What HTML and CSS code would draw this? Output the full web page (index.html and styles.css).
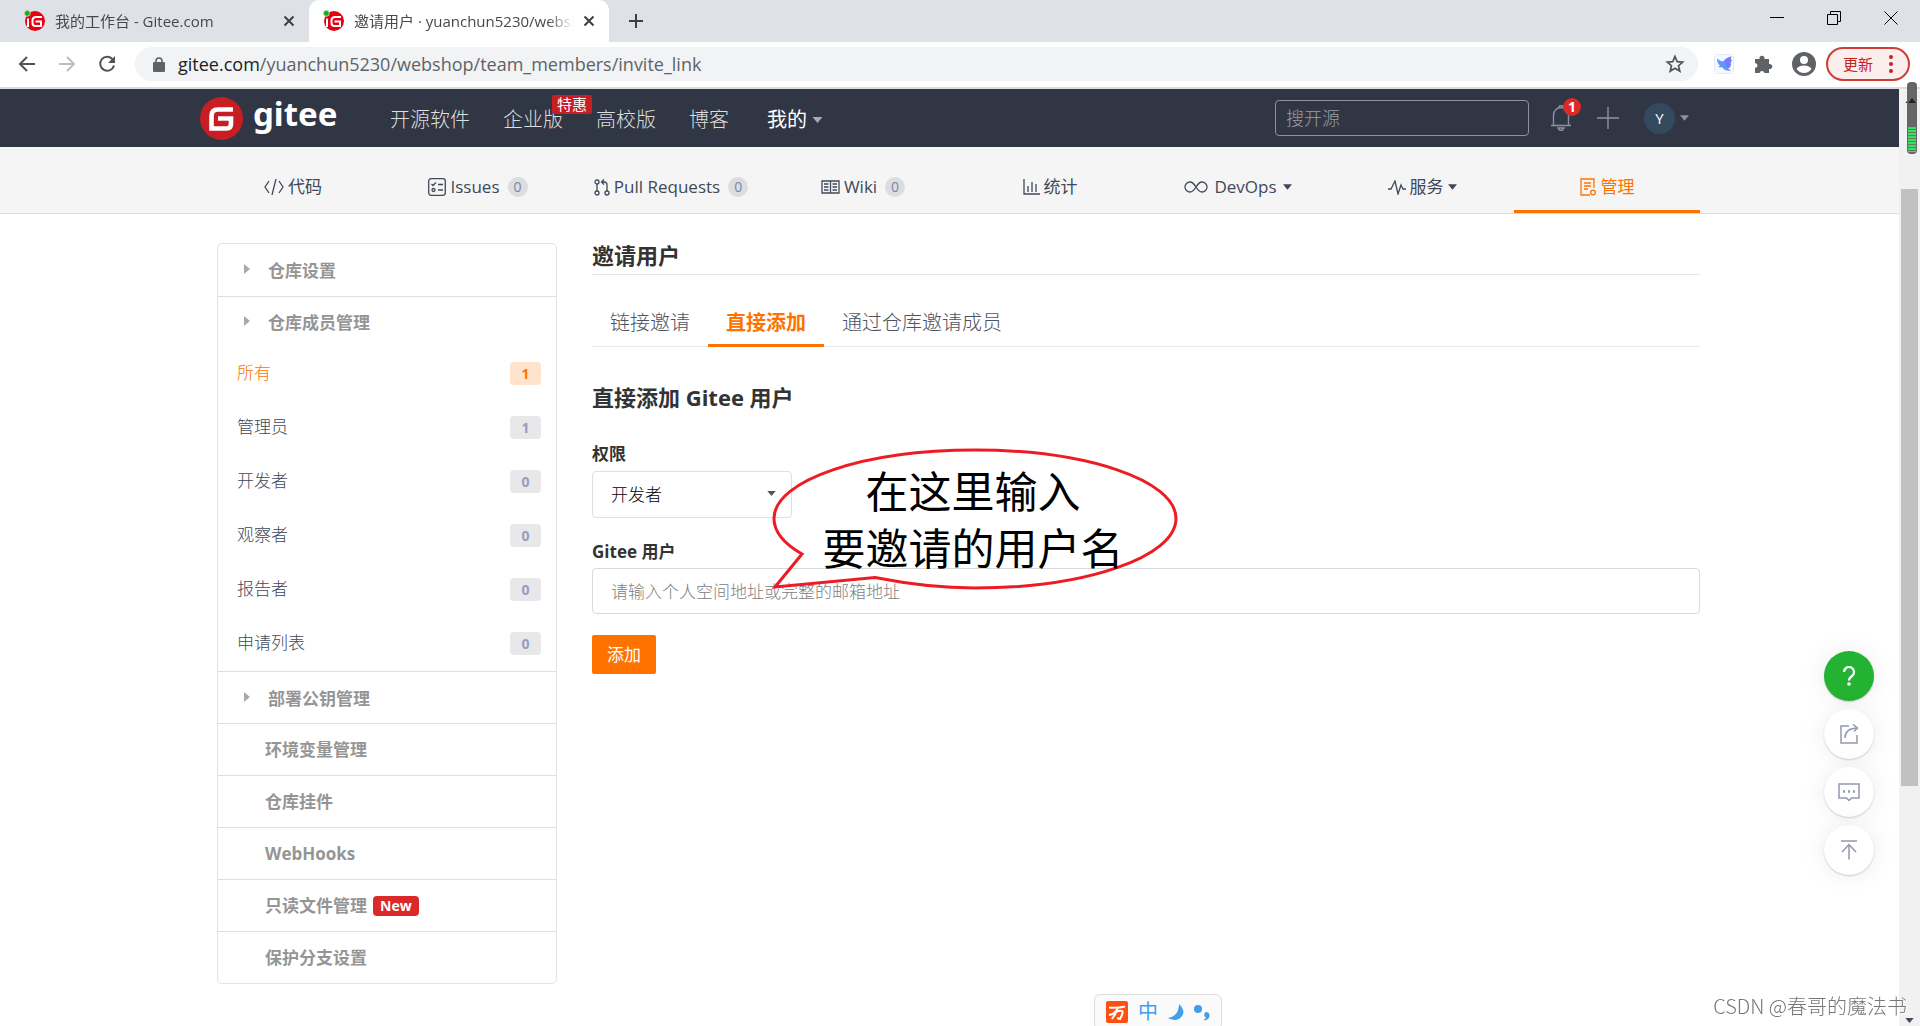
FILE: index.html
```html
<!DOCTYPE html>
<html lang="zh-CN">
<head>
<meta charset="utf-8">
<title>邀请用户 · yuanchun5230/webshop</title>
<link rel="stylesheet" href="styles.css">
</head>
<body>
<svg class="defs" width="0" height="0" aria-hidden="true">
  <symbol id="favicon" viewBox="0 0 22 22">
    <circle cx="11" cy="11" r="10" fill="#e60012"/>
    <path d="M18 7h-6Q8.500 7 8.500 10.500v2.500q0 3 3 3H17v-4.500h-5.500" fill="none" stroke="#fff" stroke-width="2"/>
    <path d="M4 8.500v8.500" stroke="#fff" stroke-width="2"/>
    <circle cx="3.300" cy="3.300" r="3" fill="#13b316" stroke="#dee1e6" stroke-width=".8"/>
  </symbol>
  <symbol id="cross" viewBox="0 0 12 12"><path d="M1.500 1.500l9 9m0-9l-9 9" fill="none" stroke="#3c4043" stroke-width="2"/></symbol>
  <symbol id="down" viewBox="0 0 10 6"><path d="M0 0h10L5 6z" fill="currentColor"/></symbol>
  <symbol id="right" viewBox="0 0 6 10"><path d="M0 0v10l6-5z" fill="#aaa"/></symbol>
</svg>

<header class="browser">
  <div class="tabstrip">
    <div class="tab">
      <svg class="fav"><use href="#favicon"/></svg><span class="tab-title">我的工作台 - Gitee.com</span>
      <button class="bare" aria-label="关闭标签"><svg width="12" height="12"><use href="#cross"/></svg></button>
    </div>
    <div class="tab active">
      <svg class="fav"><use href="#favicon"/></svg><span class="tab-title">邀请用户 · yuanchun5230/webshop</span>
      <button class="bare" aria-label="关闭标签"><svg width="12" height="12"><use href="#cross"/></svg></button>
    </div>
    <button class="bare newtab" aria-label="新标签页"><svg width="16" height="16" viewBox="0 0 16 16"><path d="M8 1v14M1 8h14" stroke="#3c4043" stroke-width="2"/></svg></button>
    <div class="window-buttons">
      <button class="bare" aria-label="最小化"><svg width="14" height="14" viewBox="0 0 14 14"><path d="M0 6.500h14" stroke="#000"/></svg></button>
      <button class="bare" aria-label="还原"><svg width="14" height="14" viewBox="0 0 14 14"><path d="M.5 3.500h10v10H.5zM3.500 3V.5h10v10H11" fill="none" stroke="#000"/></svg></button>
      <button class="bare" aria-label="关闭"><svg width="14" height="14" viewBox="0 0 14 14"><path d="M.5.500l13 13m0-13l-13 13" stroke="#000"/></svg></button>
    </div>
  </div>
  <div class="toolbar">
    <div class="history">
      <button class="bare" aria-label="后退"><svg width="18" height="18" viewBox="0 0 18 18"><path d="M17 9H2m7-7L2 9l7 7" fill="none" stroke="#50545a" stroke-width="2"/></svg></button>
      <button class="bare" aria-label="前进"><svg width="18" height="18" viewBox="0 0 18 18"><path d="M1 9h15M9 2l7 7-7 7" fill="none" stroke="#bcbec1" stroke-width="2"/></svg></button>
      <button class="bare" aria-label="刷新"><svg width="18" height="18" viewBox="0 0 18 18"><path d="M14.800 4.500A7 7 0 1 0 16 10.500" fill="none" stroke="#50545a" stroke-width="2"/><path d="M17 1v7h-7z" fill="#50545a"/></svg></button>
    </div>
    <div class="address">
      <svg width="12" height="15" viewBox="0 0 12 15"><rect y="5" width="12" height="10" rx="1" fill="#5f6368"/><path d="M3 6V4a3 3 0 0 1 6 0v2" fill="none" stroke="#5f6368" stroke-width="1.600"/></svg>
      <div class="url" role="textbox" aria-label="地址"><b>gitee.com</b>/yuanchun5230/webshop/team_members/invite_link</div>
      <button class="bare" aria-label="收藏"><svg width="20" height="20" viewBox="0 0 20 20"><path d="M10 2.500l2.200 5.100 5.500.5-4.200 3.600 1.300 5.400L10 14.200l-4.800 2.900 1.300-5.400L2.300 8.100l5.500-.5z" fill="none" stroke="#50545a" stroke-width="1.700"/></svg></button>
    </div>
    <div class="extensions">
      <svg width="20" height="20" viewBox="0 0 20 20"><rect x=".5" y=".5" width="19" height="19" rx="3" fill="#f8f9ff" stroke="#e4e8fa"/><path d="M3 4.500q4 3.500 7 2.500 2-3.500 7.500-4.500-1.500 2.500.5 4-1 .5-1.500 2 1 4-2.500 6l3 2q-6 1-8.500-3L4 13l2-1.500Q3 9 3 4.500z" fill="#5f97fb"/><path d="M10 7q2-3.500 7.500-4.500-1.500 2.500.5 4-1 .5-1.500 2 1 4-2.500 6z" fill="#7f77ff"/></svg>
      <svg width="20" height="20" viewBox="0 0 20 20"><path d="M2 5h4.500a2.600 2.600 0 1 1 5 0H16v5a2.600 2.600 0 1 1 0 5v4h-4.500a2.600 2.600 0 0 0-5 0H2v-5a2.500 2.500 0 0 0 0-5z" fill="#5f6368"/></svg>
      <svg width="24" height="24" viewBox="0 0 24 24"><circle cx="12" cy="12" r="12" fill="#5f6368"/><circle cx="12" cy="8" r="4" fill="#fff"/><path d="M4.500 17q2-3.500 7.500-3.500t7.500 3.500q-3 4-7.500 4t-7.500-4z" fill="#fff"/></svg>
    </div>
    <button class="update">更新<svg width="4" height="18" viewBox="0 0 4 18"><g fill="#c5221f"><circle cx="2" cy="2" r="2"/><circle cx="2" cy="9" r="2"/><circle cx="2" cy="16" r="2"/></g></svg></button>
  </div>
</header>

<div class="viewport">
  <div class="page">
    <header class="site-header">
      <a class="logo" href="#">
        <svg width="43" height="43" viewBox="0 0 43 43"><circle cx="21.500" cy="21.500" r="21.500" fill="#c71d23"/><path d="M33 12.500H18q-6.500 0-6.500 6.500v12.500h15q4.500 0 4.500-5v-5H18" fill="none" stroke="#fff" stroke-width="4.600"/></svg>
        <span>gitee</span>
      </a>
      <nav class="site-nav">
        <a href="#">开源软件</a>
        <a class="enterprise" href="#">企业版<em>特惠</em></a>
        <a href="#">高校版</a>
        <a href="#">博客</a>
        <a class="mine" href="#">我的<svg width="11" height="6"><use href="#down"/></svg></a>
      </nav>
      <input class="search" type="text" placeholder="搜开源" aria-label="搜开源">
      <div class="user-tools">
        <button class="bare bell" aria-label="通知"><svg width="22" height="26" viewBox="0 0 22 26"><path d="M1 20.500h20M3.500 20V10a7.500 7.500 0 0 1 15 0v10M9 2.500a2 2 0 0 1 4 0M8 23h6q-1 2.500-3 2.500T8 23z" fill="none" stroke="#8c92a4" stroke-width="1.400"/></svg><span>1</span></button>
        <button class="bare" aria-label="新建"><svg width="22" height="22" viewBox="0 0 22 22"><path d="M11 0v22M0 11h22" stroke="#8c92a4" stroke-width="1.400"/></svg></button>
        <button class="bare account" aria-label="账户"><span>Y</span><svg width="9" height="6"><use href="#down"/></svg></button>
      </div>
    </header>

    <nav class="repo-nav">
      <a href="#"><svg width="20" height="16" viewBox="0 0 20 16"><path d="M5 2L1 8l4 6M15 2l4 6-4 6M12 0L8 16"/></svg>代码</a>
      <a href="#"><svg width="18" height="18" viewBox="0 0 18 18"><rect x=".7" y=".7" width="16.600" height="16.600" rx="2.500"/><path d="M3.500 6l1.500 1.500L8 4.500M10 6.500h5M10 12h5"/><circle cx="5.500" cy="12" r="1.500"/></svg>Issues<i>0</i></a>
      <a href="#"><svg width="16" height="17" viewBox="0 0 16 17"><circle cx="3" cy="3" r="2"/><circle cx="3" cy="14" r="2"/><circle cx="13" cy="14" r="2"/><path d="M3 5v7M13 12V6q0-3-3-3H8m2-2.500L7.500 3 10 5.500"/></svg>Pull Requests<i>0</i></a>
      <a href="#"><svg width="19" height="14" viewBox="0 0 19 14"><path d="M1 1h17v12H1zM9.500 1v12M3 4h4.500M3 7h4.500M3 10h4.500M11.500 4H16M11.500 7H16M11.500 10H16"/></svg>Wiki<i>0</i></a>
      <a href="#"><svg width="17" height="16" viewBox="0 0 17 16"><path d="M1 0v15h16M5 7v6M9 3v10M13 5v8"/></svg>统计</a>
      <a class="devops" href="#"><svg width="24" height="12" viewBox="0 0 24 12"><path d="M12 6Q9 1 6 1a5 5 0 0 0 0 10q3 0 6-5t6-5a5 5 0 0 1 0 10q-3 0-6-5z"/></svg>DevOps<svg class="caret" width="9" height="6"><use href="#down"/></svg></a>
      <a href="#"><svg width="18" height="15" viewBox="0 0 18 15"><path d="M0 9h3L7 1l3 13 3-9 2 4h3"/></svg>服务<svg class="caret" width="9" height="6"><use href="#down"/></svg></a>
      <a class="current" href="#"><svg width="17" height="18" viewBox="0 0 17 18"><path d="M10 17H1V1h13v9M4 5h7M4 8h7M4 11h4"/><circle cx="13" cy="14.500" r="2.300"/></svg>管理</a>
    </nav>

    <div class="columns">
      <aside class="side">
        <a class="group" href="#"><svg class="tri" width="6" height="10"><use href="#right"/></svg>仓库设置</a>
        <section class="members">
          <a class="group" href="#"><svg class="tri" width="6" height="10"><use href="#right"/></svg>仓库成员管理</a>
          <a class="role selected" href="#">所有<span>1</span></a>
          <a class="role" href="#">管理员<span>1</span></a>
          <a class="role" href="#">开发者<span>0</span></a>
          <a class="role" href="#">观察者<span>0</span></a>
          <a class="role" href="#">报告者<span>0</span></a>
          <a class="role" href="#">申请列表<span>0</span></a>
        </section>
        <a class="group" href="#"><svg class="tri" width="6" height="10"><use href="#right"/></svg>部署公钥管理</a>
        <a class="group plain" href="#">环境变量管理</a>
        <a class="group plain" href="#">仓库挂件</a>
        <a class="group plain" href="#">WebHooks</a>
        <a class="group plain" href="#">只读文件管理<em>New</em></a>
        <a class="group plain" href="#">保护分支设置</a>
      </aside>

      <main class="main">
        <h1>邀请用户</h1>
        <nav class="invite-tabs">
          <a href="#">链接邀请</a>
          <a class="current" href="#">直接添加</a>
          <a href="#">通过仓库邀请成员</a>
        </nav>
        <h2>直接添加 Gitee 用户</h2>
        <form class="invite">
          <label for="role">权限</label>
          <div class="select">
            <select id="role"><option>开发者</option></select>
            <svg width="9" height="5"><use href="#down"/></svg>
          </div>
          <label for="user">Gitee 用户</label>
          <input id="user" type="text" placeholder="请输入个人空间地址或完整的邮箱地址">
          <button type="button">添加</button>
        </form>
        <div class="callout">
          <svg width="408" height="142" viewBox="0 0 408 142"><path d="M30 106L3 139l100-9.500C136 136 168 140 203 140c111 0 201-31 201-69.500S314 2 203 2 2 32 2 70.500Q2 90 30 106z" fill="none" stroke="#ed1c24" stroke-width="3"/></svg>
          <p>在这里输入<br>要邀请的用户名</p>
        </div>
      </main>
    </div>

    <div class="float-tools">
      <button class="bare help" aria-label="帮助"><svg width="14" height="20" viewBox="0 0 14 20"><path d="M2 6a5 5 0 1 1 8 4Q7 12 7 14.500" fill="none" stroke="#fff" stroke-width="2.200"/><circle cx="7" cy="18" r="1.800" fill="#fff"/></svg></button>
      <button class="bare" aria-label="分享"><svg width="20" height="20" viewBox="0 0 20 20"><path d="M10 2H2v17h16v-8M6 14q0-9 11-10M14 .5L18.500 4 15 7.500"/></svg></button>
      <button class="bare" aria-label="反馈"><svg width="22" height="20" viewBox="0 0 22 20"><path d="M1 2h20v14h-7.500L11 18.500 8.500 16H1z"/><path d="M5 9.500h2m3 0h2m3 0h2" stroke-width="2.400"/></svg></button>
      <button class="bare" aria-label="回到顶部"><svg width="18" height="20" viewBox="0 0 18 20"><path d="M1 1h16M9 19.500V5M2 12l7-7.500 7 7.500"/></svg></button>
    </div>
  </div>

  <div class="scrollbar">
    <svg width="9" height="5" viewBox="0 0 10 6"><path d="M0 6h10L5 0z" fill="#333"/></svg>
    <div class="thumb"></div>
    <svg width="9" height="5"><use href="#down"/></svg>
  </div>
</div>

<div class="battery"><svg width="9" height="5" viewBox="0 0 10 6"><path d="M0 6h10L5 0z" fill="#222"/></svg><span></span></div>

<div class="ime">
  <svg width="22" height="22" viewBox="0 0 22 22"><rect width="22" height="22" rx="2" fill="#ff5011"/><path d="M3 6.500q8 1 16-1M3 14q6-1 9-7M8 12q5-3 8-2 2 1-2 8l-3-1M10 12l-4 6" fill="none" stroke="#fff" stroke-width="2"/></svg>
  <span>中</span>
  <svg width="16" height="17" viewBox="0 0 16 17"><path d="M11 0q7 7 3 12-5 7-14 2 11-2 11-14z" fill="#449ced"/></svg>
  <svg width="16" height="17" viewBox="0 0 16 17"><circle cx="4" cy="5" r="4" fill="#449ced"/><path d="M12 8a3.500 3.500 0 0 1 3.500 3.500q0 4-5 5l-.5-1q2-1 2-2a3 3 0 0 1 0-5.500z" fill="#449ced"/></svg>
</div>
<div class="watermark">CSDN @春哥的魔法书</div>
</body>
</html>
```

FILE: styles.css
```css
* { box-sizing: border-box; }

body {
  margin: 0;
  height: 100vh;
  display: flex;
  flex-direction: column;
  overflow: hidden;
  background: #fff;
  color: #40485b;
  font: 17px/24px "Open Sans", "Noto Sans CJK SC", sans-serif;
}

a { color: inherit; text-decoration: none; }
svg { display: block; flex: none; }
em, i { font-style: normal; }
.defs { position: absolute; }
button, input, select { font: inherit; }

.bare {
  display: flex;
  align-items: center;
  justify-content: center;
  padding: 0;
  border: 0;
  background: none;
}

/* Browser frame */
.browser { border-bottom: 2px solid #dadce0; }

.tabstrip {
  display: flex;
  align-items: center;
  height: 42px;
  background: #dee1e6;
}

.tab {
  display: flex;
  align-items: center;
  gap: 9px;
  height: 42px;
  width: 300px;
  padding: 0 14px;
  color: #45494d;
  font-size: 15px;
}
.tab:first-child { width: 309px; padding-left: 24px; }
.tab.active { background: #fff; border-radius: 10px 10px 0 0; }
.fav { width: 22px; height: 22px; }

.tab-title {
  flex: 1;
  overflow: hidden;
  white-space: nowrap;
  -webkit-mask-image: linear-gradient(90deg, #000 88%, transparent);
  mask-image: linear-gradient(90deg, #000 88%, transparent);
}

.newtab { margin-left: 19px; }
.window-buttons { display: flex; gap: 43px; margin: 0 22px 6px auto; }

.toolbar {
  display: flex;
  align-items: center;
  height: 44px;
  margin-bottom: 1px;
  padding: 0 10px 0 18px;
}
.history { display: flex; gap: 22px; }

.address {
  flex: 1;
  display: flex;
  align-items: center;
  gap: 13px;
  height: 34px;
  margin-left: 19px;
  padding: 0 13px 0 18px;
  border-radius: 17px;
  background: #f1f3f4;
}
.url { flex: 1; color: #5f6368; font-size: 18px; }
.url b { color: #202124; font-weight: 400; }

.extensions { display: flex; align-items: center; gap: 19px; margin: 0 10px 0 16px; }

.update {
  display: flex;
  align-items: center;
  gap: 16px;
  height: 34px;
  padding: 0 15px;
  border: 2px solid #d03c36;
  border-radius: 17px;
  background: #fceeed;
  color: #c5221f;
  font-size: 15px;
}

/* Page and scrollbar */
.viewport { flex: 1; display: flex; min-height: 0; }
.page { flex: 1; min-width: 0; }

.scrollbar {
  display: flex;
  flex-direction: column;
  align-items: center;
  width: 21px;
  padding: 9px 0 3px;
  background: #f1f1f1;
}
.thumb { width: 17px; height: 597px; margin: 86px 0 auto; background: #c1c1c1; }

/* Site header */
.site-header {
  display: flex;
  align-items: center;
  height: 58px;
  padding: 0 210px 0 200px;
  background: #303643;
}

.logo { display: flex; align-items: center; gap: 10px; width: 190px; }
.logo span { color: #fff; font: 700 33px/44px "Noto Sans", sans-serif; padding-bottom: 8px; }

.site-nav { display: flex; color: #dedede; font-size: 20px; font-weight: 300; gap: 33px; padding-top: 3px; }
.enterprise { position: relative; }
.enterprise em {
  position: absolute;
  left: 49px;
  top: -13px;
  padding: 0 5px;
  border-radius: 2px;
  background: #c71d23;
  color: #fff;
  font-size: 15px;
  font-weight: 400;
  line-height: 19px;
  white-space: nowrap;
}
.mine { display: flex; align-items: center; gap: 5px; padding-left: 5px; color: #fff; font-weight: 400; }
.mine svg { color: #aaa; }

.search {
  width: 254px;
  height: 36px;
  margin-left: auto;
  padding: 0 10px;
  border: 1px solid #8c92a4;
  border-radius: 4px;
  background: transparent;
  color: #fff;
  font-size: 18px;
  font-weight: 300;
}
.search::placeholder { color: #999ca3; }

.user-tools { display: flex; align-items: center; gap: 25px; margin-left: 21px; }
.bell { position: relative; }
.bell span {
  position: absolute;
  left: 13px;
  top: -7px;
  width: 18px;
  height: 18px;
  border-radius: 9px;
  background: #db2828;
  color: #fff;
  font-size: 14px;
  font-weight: 700;
  line-height: 18px;
}
.account { gap: 5px; color: #8c92a4; }
.account span {
  width: 31px;
  height: 31px;
  border-radius: 50%;
  background: #34495e;
  color: #fff;
  font-size: 15px;
  line-height: 31px;
}

/* Repository navigation */
.repo-nav {
  display: grid;
  grid-template-columns: 186fr 184fr 202fr 182fr 192fr 184fr 184fr 186fr;
  height: 67px;
  padding: 0 199px 0 200px;
  border-bottom: 1px solid #dcdcdc;
  background: #f5f5f5;
}
.repo-nav a {
  display: flex;
  align-items: center;
  justify-content: center;
  gap: 4px;
  padding-top: 14px;
  white-space: nowrap;
}
.repo-nav svg:not(.caret) { fill: none; stroke: currentColor; stroke-width: 1.3; }
.repo-nav i {
  min-width: 20px;
  margin-left: 4px;
  border-radius: 10px;
  background: #dcdde0;
  color: #7b87a8;
  font-size: 14px;
  line-height: 20px;
  text-align: center;
}
.repo-nav .devops { gap: 6px; }
.repo-nav .current {
  padding-top: 17px;
  border-bottom: 3px solid #fe7300;
  color: #fe7300;
}

/* Body columns */
.columns {
  display: flex;
  align-items: flex-start;
  gap: 35px;
  padding: 29px 199px 0 217px;
}

.side {
  width: 340px;
  border: 1px solid #dfe3e8;
  border-radius: 5px;
}
.side > * + * { border-top: 1px solid #dcdfe3; }

.group {
  display: flex;
  align-items: center;
  gap: 18px;
  height: 52px;
  padding: 2px 0 0 26px;
  color: #959595;
  font-weight: 700;
}
.group.plain { padding: 0 0 0 47px; gap: 6px; }
.group em {
  padding: 0 7px;
  border-radius: 4px;
  background: #db2828;
  color: #fff;
  font-size: 14px;
  line-height: 20px;
}
.tri { margin-bottom: 4px; }

.members .group { height: 50px; }
.role {
  display: flex;
  align-items: center;
  justify-content: space-between;
  height: 54px;
  padding: 0 15px 2px 19px;
  font-weight: 300;
}
.role span {
  width: 31px;
  border-radius: 4px;
  background: #e8e8ea;
  color: #94a0bf;
  font-size: 14px;
  font-weight: 700;
  line-height: 23px;
  text-align: center;
}
.role.selected { color: #fe7300; }
.role.selected span { background: #ffe3cc; color: #fe7300; }

.main { position: relative; flex: 1; color: #333; }

h1, h2 { margin: 0; font-size: 22px; line-height: 30px; font-weight: 700; }
h1 { height: 32px; line-height: 25px; border-bottom: 1px solid #e3e6e9; }

.invite-tabs {
  display: flex;
  height: 72px;
  border-bottom: 1px solid #e3e9ed;
  color: #4c5364;
  font-size: 20px;
  font-weight: 300;
}
.invite-tabs a { height: 72px; padding: 36px 18px 0; }
.invite-tabs .current { border-bottom: 3px solid #fe7300; color: #fe7300; font-weight: 700; }

h2 { margin-top: 35px; }

.invite { display: flex; flex-direction: column; align-items: flex-start; font-weight: 300; }
.invite label { font-weight: 700; }
.invite label[for="role"] { margin: 30px 0 5px; }
.invite label[for="user"] { margin: 22px 0 4px; }

.select { position: relative; width: 200px; }
.select select {
  display: block;
  width: 100%;
  height: 47px;
  padding: 0 18px;
  border: 1px solid #dedfe1;
  border-radius: 4px;
  background: #fff;
  color: #000;
  appearance: none;
}
.select svg { position: absolute; right: 16px; top: 20px; color: #555; }

.invite input {
  width: 100%;
  height: 46px;
  padding: 0 18px;
  border: 1px solid #d9dadc;
  border-radius: 4px;
}
.invite input::placeholder { color: #808080; }

.invite button {
  height: 39px;
  margin-top: 21px;
  padding: 0 15px;
  border: 0;
  border-radius: 2px;
  background: #fe7300;
  color: #fff;
  font-weight: 400;
}

/* Speech bubble lying over the form */
.callout { position: absolute; left: 180px; top: 205px; }
.callout p {
  position: absolute;
  inset: 13px 6px auto 0;
  margin: 0;
  color: #000;
  font: 43px/57px "Noto Sans CJK SC", sans-serif;
  text-align: center;
  white-space: nowrap;
}

/* Floating round buttons */
.float-tools {
  position: fixed;
  right: 46px;
  bottom: 151px;
  display: grid;
  gap: 8px;
}
.float-tools button {
  width: 50px;
  height: 50px;
  border-radius: 50%;
  background: #fff;
  box-shadow: 0 1px 2px rgba(0, 0, 0, .18), 0 0 26px rgba(0, 0, 0, .08);
}
.float-tools .help { background: #24b232; }
.float-tools button:not(.help) svg { fill: none; stroke: #9298ad; stroke-width: 1.5; }

/* Desktop overlays */
.battery {
  position: fixed;
  right: 3px;
  top: 82px;
  width: 10px;
  height: 72px;
  padding: 16px 1px 2px;
  border-radius: 4px;
  background: #666;
}
.battery svg { width: 8px; }
.battery span {
  display: block;
  height: 25px;
  margin-top: 24px;
  background: repeating-linear-gradient(#3ddc64 0 2px, #5a8063 2px 3px);
}

.ime {
  position: fixed;
  right: 698px;
  bottom: -4px;
  display: flex;
  align-items: center;
  gap: 10px;
  height: 36px;
  padding: 0 11px;
  border: 1px solid #dcdcdc;
  border-radius: 6px;
  background: #fafafa;
  color: #449ced;
}
.ime span { font-size: 20px; }

.watermark {
  position: fixed;
  right: 13px;
  bottom: 6px;
  color: #777;
  font: 300 20px/28px "Noto Sans CJK SC", sans-serif;
  text-shadow: 1px 1px 0 #fff;
}
```
